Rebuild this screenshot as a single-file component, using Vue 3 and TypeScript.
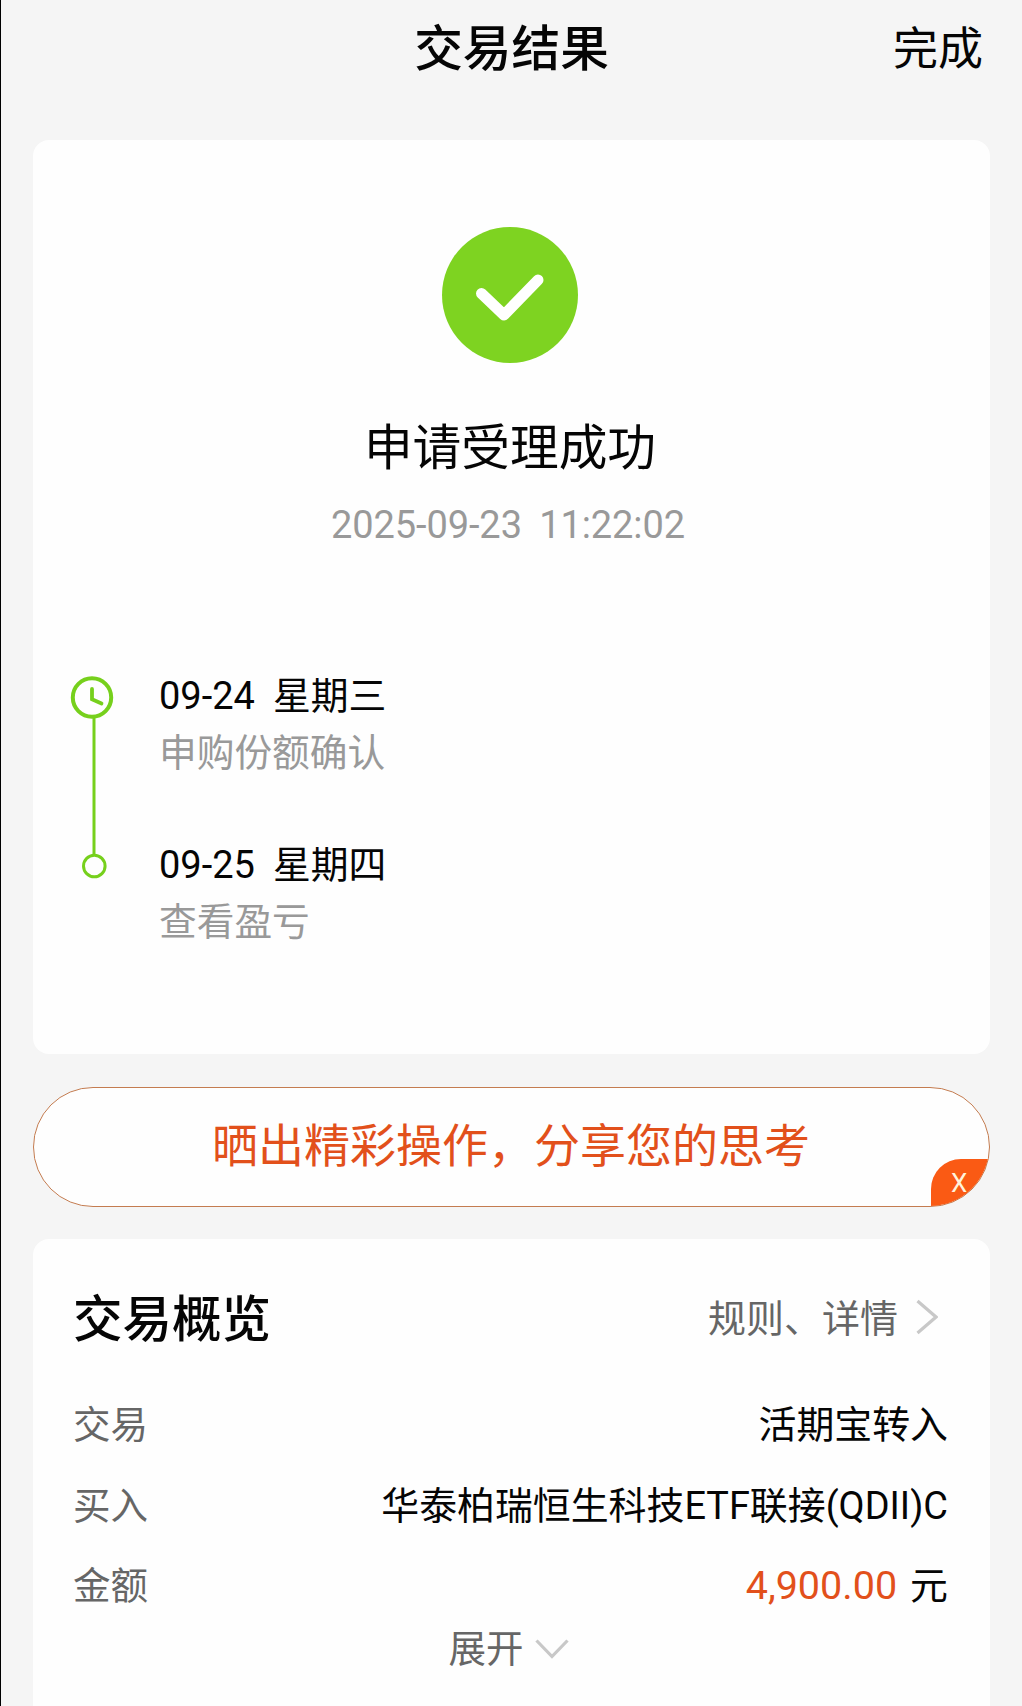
<script setup lang="ts">
interface Step {
  date: string
  weekday: string
  note: string
}

const steps: Step[] = [
  { date: '09-24', weekday: '星期三', note: '申购份额确认' },
  { date: '09-25', weekday: '星期四', note: '查看盈亏' },
]
</script>

<template>
  <div class="page">
    <header class="topbar">
      <h1 class="title">交易结果</h1>
      <span class="done">完成</span>
    </header>

    <section class="card result">
      <svg class="success" viewBox="0 0 136 136">
        <circle cx="68" cy="68" r="68" fill="#7ed321" />
        <path d="M39.5 66.5 L62 88 L96 53" fill="none" stroke="#fff" stroke-width="11" stroke-linecap="round" stroke-linejoin="round" />
      </svg>
      <h2 class="status">申请受理成功</h2>
      <p class="time">2025-09-23 11:22:02</p>

      <div class="timeline">
        <svg class="track" viewBox="0 0 44 204">
          <path d="M24 42 V180" stroke="#76d01c" stroke-width="3" />
          <circle cx="22" cy="22.5" r="19.2" fill="none" stroke="#76d01c" stroke-width="4" />
          <path d="M22 14 V24.2 L31.5 28.5" fill="none" stroke="#76d01c" stroke-width="3.8" stroke-linecap="round" />
          <circle cx="24.3" cy="191" r="10.8" fill="none" stroke="#76d01c" stroke-width="3" />
        </svg>
        <ul class="steps">
          <li v-for="s in steps" :key="s.date" class="step">
            <div class="step-date"><span class="date">{{ s.date }}</span><span class="weekday">{{ s.weekday }}</span></div>
            <div class="step-note">{{ s.note }}</div>
          </li>
        </ul>
      </div>
    </section>

    <div class="share">
      <span class="share-text">晒出精彩操作，分享您的思考</span>
      <span class="close">X</span>
    </div>

    <section class="card overview">
      <div class="head">
        <h3 class="head-title">交易概览</h3>
        <div class="more">
          <span class="more-text">规则、详情</span>
          <svg class="chev-right" viewBox="0 0 22 36"><path d="M1.5 2 L20 18 L1.5 34" /></svg>
        </div>
      </div>
      <div class="row"><span class="label">交易</span><span class="value">活期宝转入</span></div>
      <div class="row"><span class="label">买入</span><span class="value">华泰柏瑞恒生科技ETF联接(QDII)C</span></div>
      <div class="row"><span class="label">金额</span><span class="value"><span class="amount">4,900.00</span>元</span></div>
      <div class="expand">
        <span class="expand-text">展开</span>
        <svg class="chev-down" viewBox="0 0 34 20"><path d="M1.5 1.5 L17 17.5 L32.5 1.5" /></svg>
      </div>
    </section>
  </div>
</template>

<style>
body {
  background: #f5f5f5;
}
</style>

<style scoped>
.page {
  box-sizing: border-box;
  width: 1022px;
  height: 1706px;
  overflow: hidden;
  border-left: 1px solid #000;
  padding: 0 32px;
  background: #f5f5f5;
  color: #050505;
  font-family: Roboto, "Noto Sans CJK SC", sans-serif;
  font-size: 38px;
}

h1, h2, h3, p, ul {
  margin: 0;
  padding: 0;
  font-weight: 400;
  list-style: none;
}

.topbar {
  display: grid;
  grid-template-columns: 1fr auto 1fr;
  align-items: center;
  height: 140px;
  padding-bottom: 40px;
  box-sizing: border-box;
}

.title {
  grid-column: 2;
  font-size: 48.7px;
  font-weight: 500;
  line-height: 60px;
}

.done {
  justify-self: end;
  margin-right: 7px;
  font-size: 45px;
  line-height: 60px;
}

.card {
  width: 957px;
  box-sizing: border-box;
  background: #fefefe;
  border-radius: 16px;
}

.result {
  display: flex;
  flex-direction: column;
  align-items: center;
  height: 914px;
  padding-top: 87px;
}

.success {
  width: 136px;
  height: 136px;
  margin-right: 3px;
}

.status {
  margin: 56px 3px 0 0;
  font-size: 48.7px;
  line-height: 60px;
}

.time {
  margin: 21px 7px 0 0;
  color: #999;
  font-size: 38px;
  letter-spacing: -0.1px;
  word-spacing: 8px;
  line-height: 50px;
}

.timeline {
  display: flex;
  align-self: stretch;
  margin-top: 125px;
  padding-left: 37px;
}

.track {
  width: 44px;
  height: 204px;
}

.steps {
  margin: -1px 0 0 45px;
}

.step {
  height: 169px;
  line-height: 44px;
}

.step-date {
  display: flex;
  gap: 18px;
}

.weekday {
  font-size: 37.8px;
}

.step-note {
  margin-top: 13px;
  color: #999;
  font-size: 37.7px;
}

.share {
  position: relative;
  display: flex;
  align-items: center;
  justify-content: center;
  box-sizing: border-box;
  width: 957px;
  height: 120px;
  margin: 33px 0 32px;
  overflow: hidden;
  border: 1.5px solid #c47c50;
  border-radius: 60px;
  background: #fefefe;
}

.share-text {
  padding: 0 1px 2px 0;
  color: #e2501b;
  font-size: 46px;
  line-height: 60px;
}

.close {
  position: absolute;
  right: 0;
  bottom: 0;
  box-sizing: border-box;
  width: 58px;
  height: 47px;
  padding-left: 20px;
  border-top-left-radius: 30px;
  background: #fa5a14;
  color: #fff3dc;
  font-size: 26px;
  line-height: 48px;
}

.overview {
  height: 500px;
  padding: 48px 42px 0 40px;
}

.head {
  display: flex;
  align-items: center;
  justify-content: space-between;
  height: 60px;
  margin-bottom: 34.5px;
}

.head-title {
  padding-top: 6px;
  font-size: 49.5px;
  font-weight: 500;
  line-height: 60px;
}

.more {
  display: flex;
  align-items: center;
  gap: 18px;
  margin-right: 10px;
  color: #666;
}

.more-text {
  padding-bottom: 3px;
}

.chev-right,
.chev-down {
  fill: none;
  stroke: #c8c8c8;
  stroke-width: 3.2;
}

.chev-right {
  width: 22px;
  height: 36px;
}

.chev-down {
  width: 34px;
  height: 20px;
}

.row {
  display: flex;
  align-items: center;
  justify-content: space-between;
  height: 80.5px;
}

.label {
  color: #666;
  font-size: 37.5px;
}

.value {
  font-size: 37.9px;
}

.amount {
  margin-right: 13px;
  color: #e2501b;
  font-size: 39.5px;
}

.expand {
  display: flex;
  align-items: center;
  justify-content: center;
  gap: 11px;
  height: 51px;
  margin-right: 4px;
  color: #666;
}

.expand-text {
  padding-bottom: 6px;
  font-size: 37.5px;
}
</style>
